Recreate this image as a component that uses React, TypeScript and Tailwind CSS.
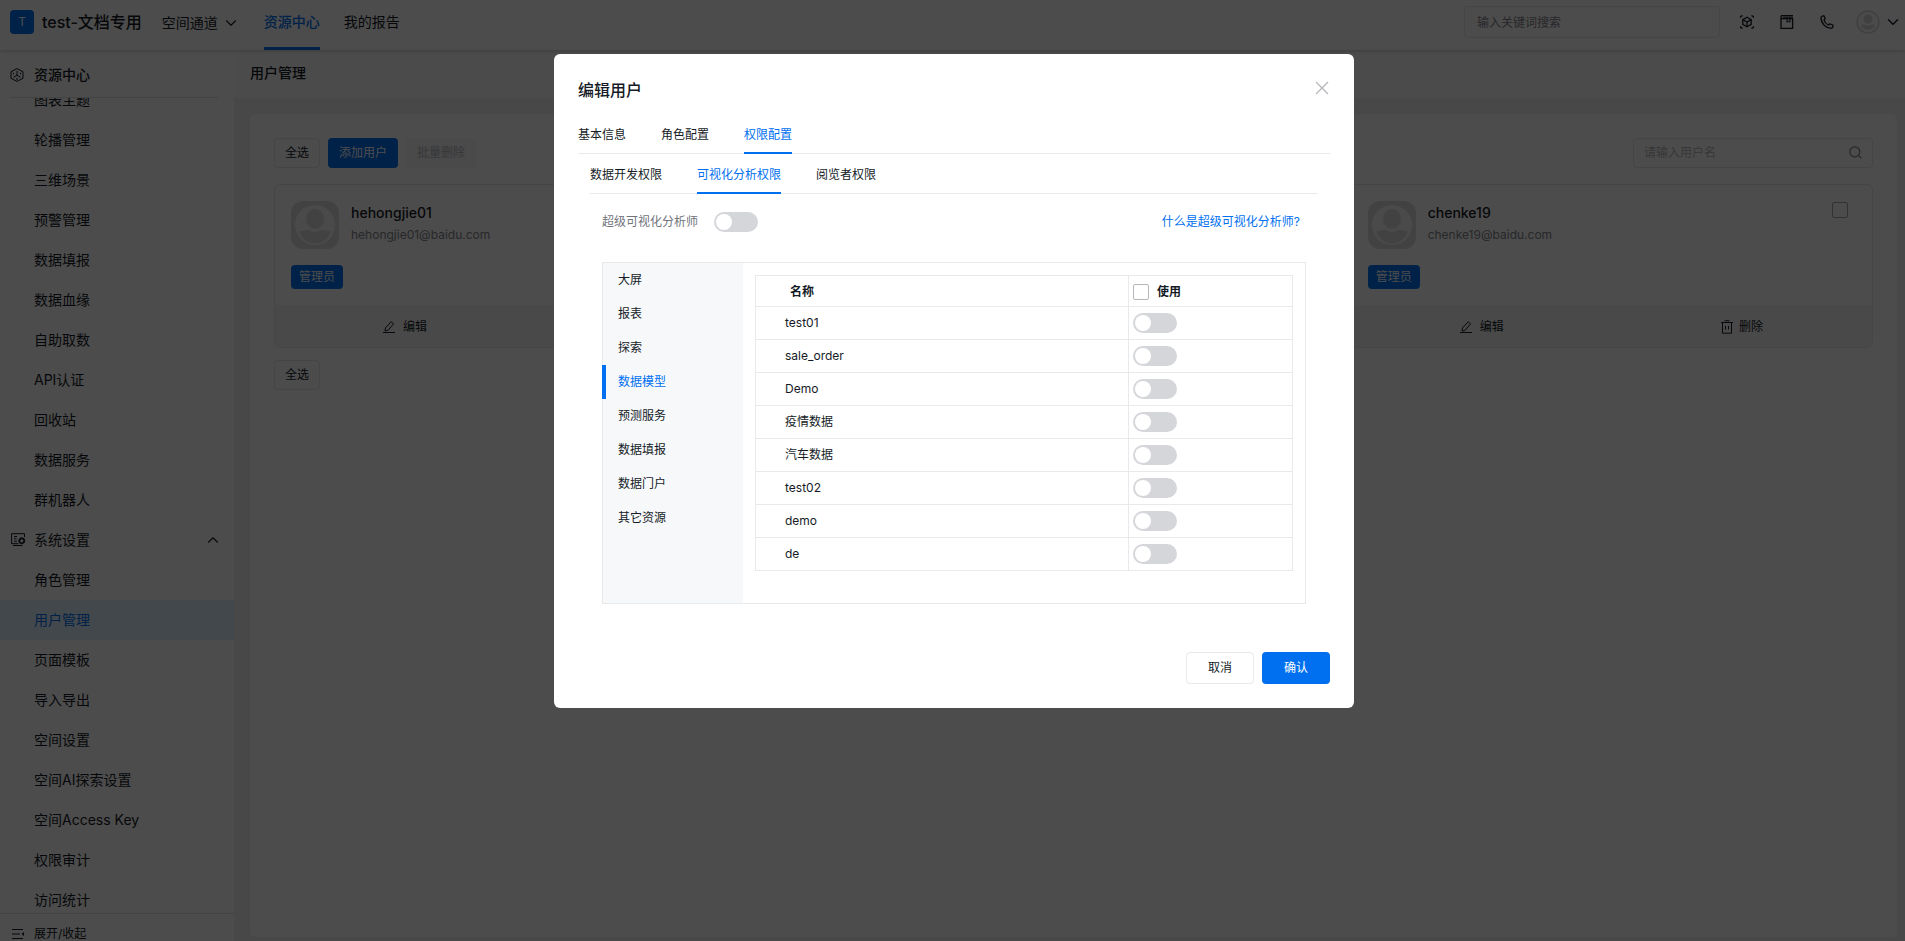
import { useEffect, useRef } from "react"
import { ChevronDown, ChevronUp } from "lucide-react"

type NavItem = { label: string; active?: boolean }

const resourceItems: NavItem[] = [
  { label: "图表主题" },
  { label: "轮播管理" },
  { label: "三维场景" },
  { label: "预警管理" },
  { label: "数据填报" },
  { label: "数据血缘" },
  { label: "自助取数" },
  { label: "API认证" },
  { label: "回收站" },
  { label: "数据服务" },
  { label: "群机器人" },
]

const systemItems: NavItem[] = [
  { label: "角色管理" },
  { label: "用户管理", active: true },
  { label: "页面模板" },
  { label: "导入导出" },
  { label: "空间设置" },
  { label: "空间AI探索设置" },
  { label: "空间Access Key" },
  { label: "权限审计" },
  { label: "访问统计" },
]

const categories = ["大屏", "报表", "探索", "数据模型", "预测服务", "数据填报", "数据门户", "其它资源"]

const models = ["test01", "sale_order", "Demo", "疫情数据", "汽车数据", "test02", "demo", "de"]

function CubeIcon() {
  return (
    <svg width="14" height="14" viewBox="0 0 14 14" fill="none" stroke="currentColor">
      <path d="M7 .6 13 3.700v6.600L7 13.400 1 10.300V3.700Z" />
      <path d="M7 3v4.300M7 7.300l-3.500 2M7 7.300l3.500 2" />
      <path d="M3.500 4.800v1.500M10.500 4.800v1.500M6 11h2" />
    </svg>
  )
}

function ScreenGearIcon() {
  return (
    <svg width="15" height="14" viewBox="0 0 15 14" fill="none" stroke="currentColor">
      <path d="M13.5 4V.7H.6v10h6.900" />
      <path d="M3 3.500h3M3 5.800h2.500M3 8.200h3M2 12.500h9.500" />
      <circle cx="10.800" cy="7.800" r="2.400" strokeWidth="1.600" />
      <path d="M10.800 4.300v1M10.800 10.300v1M7.300 7.800h1M13.300 7.800h1" />
    </svg>
  )
}

function ScanCubeIcon() {
  return (
    <svg width="14" height="14" viewBox="0 0 14 14" fill="none" stroke="currentColor" strokeWidth="1.300">
      <path d="M.6 2.800V1.400L2.600.6M11.400.6l2 .8v1.400M.6 11.200v1.400l2 .8M11.400 13.400l2-.8v-1.400" />
      <path d="M7 2.300 11.200 4.600v4.800L7 11.700 2.800 9.400V4.600Z" />
      <path d="M2.800 4.600 7 7l4.200-2.400M7 7v4.700" />
    </svg>
  )
}

function BookIcon() {
  return (
    <svg width="14" height="14" viewBox="0 0 14 14" fill="none" stroke="currentColor">
      <path d="M13 .600H2.200C1.200.600 1 1.300 1 2v11.400h11.600V3.700H1" strokeWidth="1.300" />
      <path d="M3 2.200h10" />
      <path d="M7 4v3.200l1.500-1 1.500 1V4" />
    </svg>
  )
}

function PhoneIcon() {
  return (
    <svg
      width="14"
      height="14"
      viewBox="0 0 14 14"
      fill="none"
      stroke="currentColor"
      strokeWidth="1.300"
      strokeLinejoin="round"
    >
      <path d="M1 2.200 2.600.9h1.500l1.100 2.900-1.300 1.300c.7 2.100 2.200 3.800 4.500 4.900l1.400-1.200 3.100 1.200v2.200l-1.300 1C5.800 13.400.9 8.400 1 2.200Z" />
    </svg>
  )
}

function SearchIcon() {
  return (
    <svg className="mb-0.5" width="13" height="13" viewBox="0 0 13 13" fill="none" stroke="currentColor" strokeWidth="1.200">
      <circle cx="5.800" cy="5.800" r="5" />
      <path d="m9.400 9.400 3 3" />
    </svg>
  )
}

function PencilIcon() {
  return (
    <svg width="12" height="12" viewBox="0 0 12 12" fill="none" stroke="currentColor">
      <path d="M8.200.7 10.500 3 5 9.300 2 10l.4-3Z" strokeLinejoin="round" />
      <path d="M0 11.500h12" />
    </svg>
  )
}

function TrashIcon() {
  return (
    <svg width="12" height="14" viewBox="0 0 12 14" fill="none" stroke="currentColor">
      <path d="M0 2.500h12M3.500.800h5M1.500 2.500v10.700h9V2.500M4.500 6v3.500M7.500 6v3.500" />
    </svg>
  )
}

function CollapseIcon() {
  return (
    <svg width="12" height="12" viewBox="0 0 12 12" fill="none" stroke="currentColor">
      <path d="M0 1.500h11M0 6h8M0 10.500h11" />
      <path d="M12 4v4L9.500 6Z" fill="currentColor" stroke="none" />
    </svg>
  )
}

function Avatar() {
  return (
    <svg className="rounded-xl" width="48" height="48" viewBox="0 0 48 48">
      <rect width="48" height="48" fill="#dcdcdc" />
      <circle cx="24" cy="24" r="20" fill="#f8f8f8" />
      <ellipse cx="24" cy="18" rx="9" ry="10" fill="#dcdcdc" />
      <path d="M8 30.500q7-2 10-1.500 6 4 12 0 3-.5 10 1.500-5 12-16 12T8 30.500Z" fill="#dcdcdc" />
    </svg>
  )
}

function Switch({ label, id }: { label?: string; id?: string }) {
  return (
    <input
      type="checkbox"
      role="switch"
      id={id}
      aria-label={label}
      className="block h-5 w-11 shrink-0 cursor-pointer appearance-none rounded-full bg-[#d4d6da] p-0.5 before:block before:size-4 before:rounded-full before:bg-white checked:bg-[#0070f0] checked:before:ml-6"
    />
  )
}

function SideLink({ item }: { item: NavItem }) {
  return (
    <li>
      <a
        href="#"
        className={
          item.active
            ? "block bg-[#e0f0ff] pl-[34px] text-sm leading-10 text-[#0070f0]"
            : "block pl-[34px] text-sm leading-10"
        }
      >
        {item.label}
      </a>
    </li>
  )
}

function Header() {
  return (
    <header className="z-10 flex h-[50px] shrink-0 items-center bg-white pr-[3px] pl-2.5 shadow-[0_1px_4px_rgba(0,0,0,0.2)]">
      <div className="mb-1.5 flex size-6 items-center justify-center rounded-sm bg-[#0070f0] text-xs text-white">T</div>
      <span className="mb-1.5 ml-2 text-base font-medium">test-文档专用</span>
      <nav className="ml-5 flex h-full text-sm leading-[44px]">
        <button className="flex items-center pb-1">
          空间通道
          <ChevronDown className="ml-1" size={18} strokeWidth={1.500} />
        </button>
        <a href="#" className="ml-6 border-b-3 border-[#0070f0] font-medium text-[#0070f0]">
          资源中心
        </a>
        <a href="#" className="ml-6">
          我的报告
        </a>
      </nav>
      <div className="mb-1.5 ml-auto flex items-center">
        <input
          type="search"
          aria-label="搜索"
          placeholder="输入关键词搜索"
          className="mr-5 h-8 w-64 rounded border border-[#e5e6e9] px-3 text-xs placeholder:text-[#84868c]"
        />
        <button aria-label="模型" className="mr-[26px]">
          <ScanCubeIcon />
        </button>
        <button aria-label="文档" className="mr-[26px]">
          <BookIcon />
        </button>
        <button aria-label="电话" className="mr-[22px]">
          <PhoneIcon />
        </button>
        <button aria-label="账户" className="flex items-center gap-1">
          <svg width="24" height="24" viewBox="0 0 24 24">
            <circle cx="12" cy="12" r="11" fill="#fafafa" stroke="#d8d8d8" strokeWidth="1.500" />
            <circle cx="12" cy="9" r="4.500" fill="#d8d8d8" />
            <path d="M5 15q3-1 4 0 3 1.500 6 0 1-1 4 0-2 4.500-7 4.500T5 15Z" fill="#d8d8d8" />
          </svg>
          <ChevronDown size={18} strokeWidth={2} />
        </button>
      </div>
    </header>
  )
}

function Sidebar() {
  const listRef = useRef<HTMLDivElement>(null)

  useEffect(() => {
    if (listRef.current) listRef.current.scrollTop = 18
  }, [])

  return (
    <aside className="flex w-[234px] shrink-0 flex-col bg-white">
      <div className="mr-4 ml-2.5 flex h-12 shrink-0 items-center gap-2.5 border-b border-[#e0e1e4] pt-0.5 text-sm font-medium">
        <CubeIcon />
        资源中心
      </div>
      <div ref={listRef} className="min-h-0 flex-1 overflow-y-auto [scrollbar-width:none]">
        <ul>
          {resourceItems.map((item) => (
            <SideLink key={item.label} item={item} />
          ))}
        </ul>
        <button className="flex h-10 w-full items-center gap-2 pr-3 pl-[11px] text-sm">
          <ScreenGearIcon />
          系统设置
          <ChevronUp className="ml-auto" size={18} strokeWidth={1.500} />
        </button>
        <ul>
          {systemItems.map((item) => (
            <SideLink key={item.label} item={item} />
          ))}
        </ul>
      </div>
      <div className="h-7 shrink-0 overflow-hidden border-t border-[#e0e1e4]">
        <button className="flex h-10 items-center gap-2.5 pl-3 text-xs">
          <CollapseIcon />
          展开/收起
        </button>
      </div>
    </aside>
  )
}

function UserCard({ name, className }: { name: string; className?: string }) {
  return (
    <article className={`overflow-hidden rounded-md border border-[#e5e6e9] ${className ?? ""}`}>
      <div className="flex h-[120px] flex-col items-start px-4 pt-4">
        <div className="flex w-full items-start">
          <Avatar />
          <div className="ml-3">
            <h3 className="text-sm leading-6 font-medium">{name}</h3>
            <p className="text-xs leading-5 text-[#84868c]">{name}@baidu.com</p>
          </div>
          <input
            type="checkbox"
            aria-label={name}
            className="mt-px mr-2 ml-auto size-4 appearance-none rounded-xs border border-[#a8aab0] checked:bg-[#0070f0]"
          />
        </div>
        <span className="mt-4 rounded bg-[#0070f0] px-2 text-xs leading-6 text-white">管理员</span>
      </div>
      <div className="grid h-[42px] grid-cols-2 bg-[#f5f6f8] pt-0.5 text-xs">
        <button className="flex items-center justify-center gap-2">
          <PencilIcon />
          编辑
        </button>
        <button className="flex items-center justify-center gap-1.5">
          <TrashIcon />
          删除
        </button>
      </div>
    </article>
  )
}

function UserPage() {
  return (
    <main className="flex min-w-0 flex-1 flex-col bg-[#f0f1f3] pb-1">
      <h1 className="h-12 shrink-0 bg-[#fcfcfc] pl-4 text-sm leading-[46px] font-medium">用户管理</h1>
      <section className="mt-4 mr-2 ml-4 flex-1 rounded-md bg-white p-6">
        <div className="flex gap-2 text-xs">
          <button className="h-[30px] rounded border border-[#e5e6e9] px-2.5">全选</button>
          <button className="h-[30px] rounded bg-[#0070f0] px-[11px] text-white">添加用户</button>
          <button disabled className="h-[30px] rounded bg-[#f7f8fa] px-[11px] text-[#b8babf]">
            批量删除
          </button>
          <label className="ml-auto flex h-[30px] w-60 items-center rounded border border-[#e5e6e9] px-2.5 text-[#84868c]">
            <input
              aria-label="请输入用户名"
              placeholder="请输入用户名"
              className="min-w-0 flex-1 outline-none placeholder:text-[#b8babf]"
            />
            <SearchIcon />
          </label>
        </div>
        <div className="mt-4 grid grid-cols-3 gap-4">
          <UserCard name="hehongjie01" />
          <UserCard name="chenke19" className="col-start-3" />
        </div>
        <button className="mt-3 h-[30px] rounded border border-[#e5e6e9] px-2.5 text-xs">全选</button>
      </section>
    </main>
  )
}

function Tabs({ tabs, active }: { tabs: string[]; active: string }) {
  return (
    <div role="tablist" className="flex h-10 gap-[35px] border-b border-[#e8e9eb] text-xs leading-[34px]">
      {tabs.map((tab) => (
        <button
          key={tab}
          role="tab"
          aria-selected={tab === active}
          className={
            tab === active
              ? "h-10 border-b-2 border-[#0070f0] pt-1 text-[#0070f0]"
              : "h-10 border-b-2 border-transparent pt-1"
          }
        >
          {tab}
        </button>
      ))}
    </div>
  )
}

function PermissionTable() {
  return (
    <table className="w-full table-fixed border-collapse text-left text-xs">
      <thead>
        <tr className="h-[31px]">
          <th className="border border-[#e8e9eb] pt-0.5 pl-[34px] font-semibold">名称</th>
          <th className="w-[164px] border border-[#e8e9eb] pt-0.5 pl-1 font-semibold">
            <label className="flex items-center gap-2">
              <input
                type="checkbox"
                className="size-4 appearance-none rounded-xs border border-[#b4b6bb] checked:bg-[#0070f0]"
              />
              使用
            </label>
          </th>
        </tr>
      </thead>
      <tbody>
        {models.map((model) => (
          <tr key={model} className="h-[33px]">
            <td className="border border-[#e8e9eb] pl-[29px]">{model}</td>
            <td className="border border-[#e8e9eb] pl-1">
              <Switch label={model} />
            </td>
          </tr>
        ))}
      </tbody>
    </table>
  )
}

function EditUserDialog() {
  return (
    <div className="fixed inset-0 z-20 flex items-start justify-center bg-black/70 pt-[54px] pl-[3px]">
      <div role="dialog" aria-modal="true" aria-labelledby="dialog-title" className="w-[800px] rounded-md bg-white p-6">
        <div className="flex h-9 items-start justify-between">
          <h2 id="dialog-title" className="text-base leading-6 font-medium">
            编辑用户
          </h2>
          <button aria-label="关闭" className="mt-0.5 text-[#b4b6bb]">
            <svg width="16" height="16" viewBox="0 0 16 16" fill="none" stroke="currentColor" strokeWidth="1.300">
              <path d="m2 2 12 12M14 2 2 14" />
            </svg>
          </button>
        </div>
        <Tabs tabs={["基本信息", "角色配置", "权限配置"]} active="权限配置" />
        <div className="px-3">
          <Tabs tabs={["数据开发权限", "可视化分析权限", "阅览者权限"]} active="可视化分析权限" />
          <div className="px-3">
            <div className="mt-[18px] flex h-5 items-center text-xs">
              <label htmlFor="super-analyst" className="mr-4 text-[#70737a]">
                超级可视化分析师
              </label>
              <Switch id="super-analyst" />
              <a href="#" className="mr-1.5 ml-auto text-[#0070f0]">
                什么是超级可视化分析师?
              </a>
            </div>
            <div className="mt-[30px] flex min-h-[342px] border border-[#e8e9eb]">
              <ul className="w-[140px] shrink-0 bg-[#f7f8fa] text-xs leading-[34px]">
                {categories.map((category) => (
                  <li key={category} className="flex">
                    <button
                      className={
                        category === "数据模型"
                          ? "-ml-px flex-1 border-l-4 border-[#0070f0] pl-3 text-left text-[#0070f0]"
                          : "flex-1 pl-[15px] text-left"
                      }
                    >
                      {category}
                    </button>
                  </li>
                ))}
              </ul>
              <div className="flex-1 p-3">
                <PermissionTable />
              </div>
            </div>
          </div>
        </div>
        <div className="mt-12 flex justify-end gap-2 text-xs">
          <button className="h-8 w-[68px] rounded border border-[#e8e9eb]">取消</button>
          <button className="h-8 w-[68px] rounded bg-[#0070f0] text-white">确认</button>
        </div>
      </div>
    </div>
  )
}

export default function App() {
  return (
    <div className="flex h-screen flex-col overflow-hidden bg-white font-['Inter','Noto_Sans_CJK_SC',sans-serif] text-[#151b26]">
      <Header />
      <div className="flex min-h-0 flex-1">
        <Sidebar />
        <UserPage />
      </div>
      <EditUserDialog />
    </div>
  )
}
